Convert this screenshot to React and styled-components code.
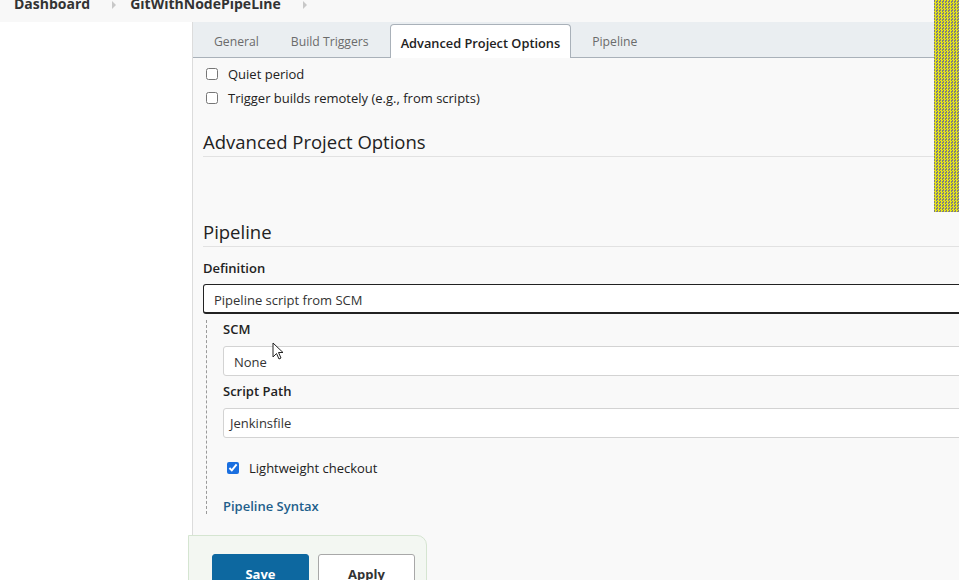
import React from "react";
import styled, { createGlobalStyle } from "styled-components";

const GlobalStyle = createGlobalStyle`
  html, body {
    margin: 0;
    padding: 0;
    overflow: hidden;
  }
  body {
    font-family: "Open Sans", "Noto Sans", "Liberation Sans", sans-serif;
    color: #333;
    background: #fff;
  }
`;

const Page = styled.div`
  position: relative;
  width: 959px;
  height: 580px;
  overflow: hidden;
  display: flex;
  flex-flow: column nowrap;
`;

const Breadcrumbs = styled.nav`
  flex: 0 0 22px;
  background: #f8f8f8;
  padding-left: 14px;
  display: flex;
  align-items: flex-start;
  overflow: hidden;
`;

const Crumb = styled.span`
  font-size: 14px;
  font-weight: 700;
  color: #333;
  line-height: 20px;
  margin-top: -6px;
`;

const Sep = styled.span`
  width: 0;
  height: 0;
  margin: 1px 14px 0 22px;
  border-top: 4px solid transparent;
  border-bottom: 4px solid transparent;
  border-left: 4px solid #c8c8c8;
`;

const Body = styled.div`
  flex: 1 1 auto;
  display: flex;
`;

const Sidebar = styled.aside`
  flex: 0 0 192px;
  background: #fff;
  border-right: 1px solid #dcdcdc;
`;

const Main = styled.main`
  flex: 1 1 auto;
  min-width: 0;
  background: #f9f9f9;
  display: flex;
  flex-flow: column nowrap;
`;

const Tabs = styled.div`
  height: 35px;
  background: #eaeef1;
  border-bottom: 1px solid #a9b1b9;
  padding-left: 10px;
  display: flex;
  align-items: flex-end;
  gap: 10px;
`;

const Tab = styled.div`
  box-sizing: border-box;
  height: ${(p) => (p.$active ? "34px" : "35px")};
  padding: 2px 10px 0;
  display: flex;
  align-items: center;
  font-size: ${(p) => (p.$active ? "12.8px" : "12.2px")};
  font-weight: ${(p) => (p.$active ? 600 : 400)};
  color: ${(p) => (p.$active ? "#222" : "#6b6b6b")};
  background: ${(p) => (p.$active ? "#fff" : "transparent")};
  border: ${(p) => (p.$active ? "1px solid #a9b1b9" : "1px solid transparent")};
  border-bottom: none;
  border-radius: 4px 4px 0 0;
  margin-bottom: ${(p) => (p.$active ? "-1px" : "0")};
`;

const Content = styled.div`
  padding: 4px 0 0 10px;
  margin-right: -40px;
`;

const CheckRow = styled.label`
  display: flex;
  align-items: center;
  height: 24px;
  padding-left: ${(p) => p.$indent || 3}px;
  margin-top: ${(p) => p.$top || 0}px;
  font-size: 13px;
  color: #222;
`;

const Check = styled.input.attrs({ type: "checkbox" })`
  width: 12px;
  height: 12px;
  margin: 0 10px 0 0;
  accent-color: #1a6fe0;
`;

const SectionTitle = styled.h2`
  margin: ${(p) => p.$top}px 0 0;
  font-size: 18.5px;
  font-weight: 400;
  color: #222;
  line-height: 26px;
  padding-bottom: 1px;
  border-bottom: 1px solid #e2e2e2;
`;

const FieldLabel = styled.div`
  font-size: 13px;
  font-weight: 600;
  color: #222;
  line-height: 18px;
  margin: ${(p) => p.$top}px 0 ${(p) => p.$bottom}px;
`;

const Select = styled.div`
  height: 30px;
  box-sizing: border-box;
  display: flex;
  align-items: center;
  padding: 2px 0 0 10px;
  background: #fff;
  border: 1px solid ${(p) => (p.$focused ? "#222" : "#d3d3d3")};
  border-width: ${(p) => (p.$focused ? "1px 1px 2px" : "1px")};
  border-radius: 3px;
  font-size: 13px;
  color: #333;
`;

const TextInput = styled.div`
  height: 30px;
  box-sizing: border-box;
  display: flex;
  align-items: center;
  padding-left: 6px;
  background: #fff;
  border: 1px solid #d3d3d3;
  border-radius: 3px;
  font-size: 13px;
  color: #333;
`;

const Nested = styled.div`
  margin: 6px 0 0 3px;
  padding: 0 0 0 16px;
  border-left: 1px dashed #9a9a9a;
`;

const Link = styled.a`
  display: block;
  margin-top: 18px;
  font-size: 13px;
  font-weight: 600;
  color: #1f5f8b;
  text-decoration: none;
  line-height: 16px;
`;

const BottomBar = styled.div`
  position: absolute;
  left: 188px;
  top: 535px;
  width: 239px;
  height: 60px;
  box-sizing: border-box;
  background: #f3f7f2;
  border: 1px solid #d5e5d1;
  border-radius: 0 10px 0 0;
  padding: 18px 0 0 23px;
  display: flex;
  gap: 9px;
`;

const Button = styled.button`
  width: 97px;
  height: 34px;
  border-radius: 3px;
  font-family: inherit;
  font-size: 13px;
  font-weight: 700;
  padding: 5px 0 0;
  background: ${(p) => (p.$primary ? "#0d68a0" : "#fff")};
  color: ${(p) => (p.$primary ? "#fff" : "#333")};
  border: ${(p) => (p.$primary ? "1px solid #0d68a0" : "1px solid #a8a8a8")};
`;

const Stripe = styled.div`
  position: absolute;
  right: 0;
  top: 0;
  width: 25px;
  height: 212px;
  background-color: #7d7d6a;
  background-image: repeating-conic-gradient(#e6e61a 0 25%, #7f7f7f 0 50%);
  background-size: 3px 3px;
`;

const Cursor = styled.svg`
  position: absolute;
  left: 272px;
  top: 342px;
`;

export default function App() {
  return (
    <Page>
      <GlobalStyle />
      <Breadcrumbs>
        <Crumb>Dashboard</Crumb>
        <Sep />
        <Crumb>GitWithNodePipeLine</Crumb>
        <Sep />
      </Breadcrumbs>
      <Body>
        <Sidebar />
        <Main>
          <Tabs>
            <Tab>General</Tab>
            <Tab>Build Triggers</Tab>
            <Tab $active>Advanced Project Options</Tab>
            <Tab>Pipeline</Tab>
          </Tabs>
          <Content>
            <CheckRow>
              <Check />
              Quiet period
            </CheckRow>
            <CheckRow>
              <Check />
              Trigger builds remotely (e.g., from scripts)
            </CheckRow>
            <SectionTitle $top={19}>Advanced Project Options</SectionTitle>
            <SectionTitle $top={62}>Pipeline</SectionTitle>
            <FieldLabel $top={12} $bottom={7}>Definition</FieldLabel>
            <Select $focused>Pipeline script from SCM</Select>
            <Nested>
              <FieldLabel $top={0} $bottom={8}>SCM</FieldLabel>
              <Select>None</Select>
              <FieldLabel $top={6} $bottom={8}>Script Path</FieldLabel>
              <TextInput>Jenkinsfile</TextInput>
              <CheckRow $indent={4} $top={18}>
                <Check defaultChecked />
                Lightweight checkout
              </CheckRow>
              <Link href="#">Pipeline Syntax</Link>
            </Nested>
          </Content>
        </Main>
      </Body>
      <BottomBar>
        <Button $primary>Save</Button>
        <Button>Apply</Button>
      </BottomBar>
      <Stripe />
      <Cursor width="12" height="19" viewBox="0 0 12 19">
        <path d="M1 1 L1 15 L4.5 11.5 L7 17 L9 16 L6.5 10.5 L11 10.5 Z" fill="#fff" stroke="#222" strokeWidth="1" />
      </Cursor>
    </Page>
  );
}
